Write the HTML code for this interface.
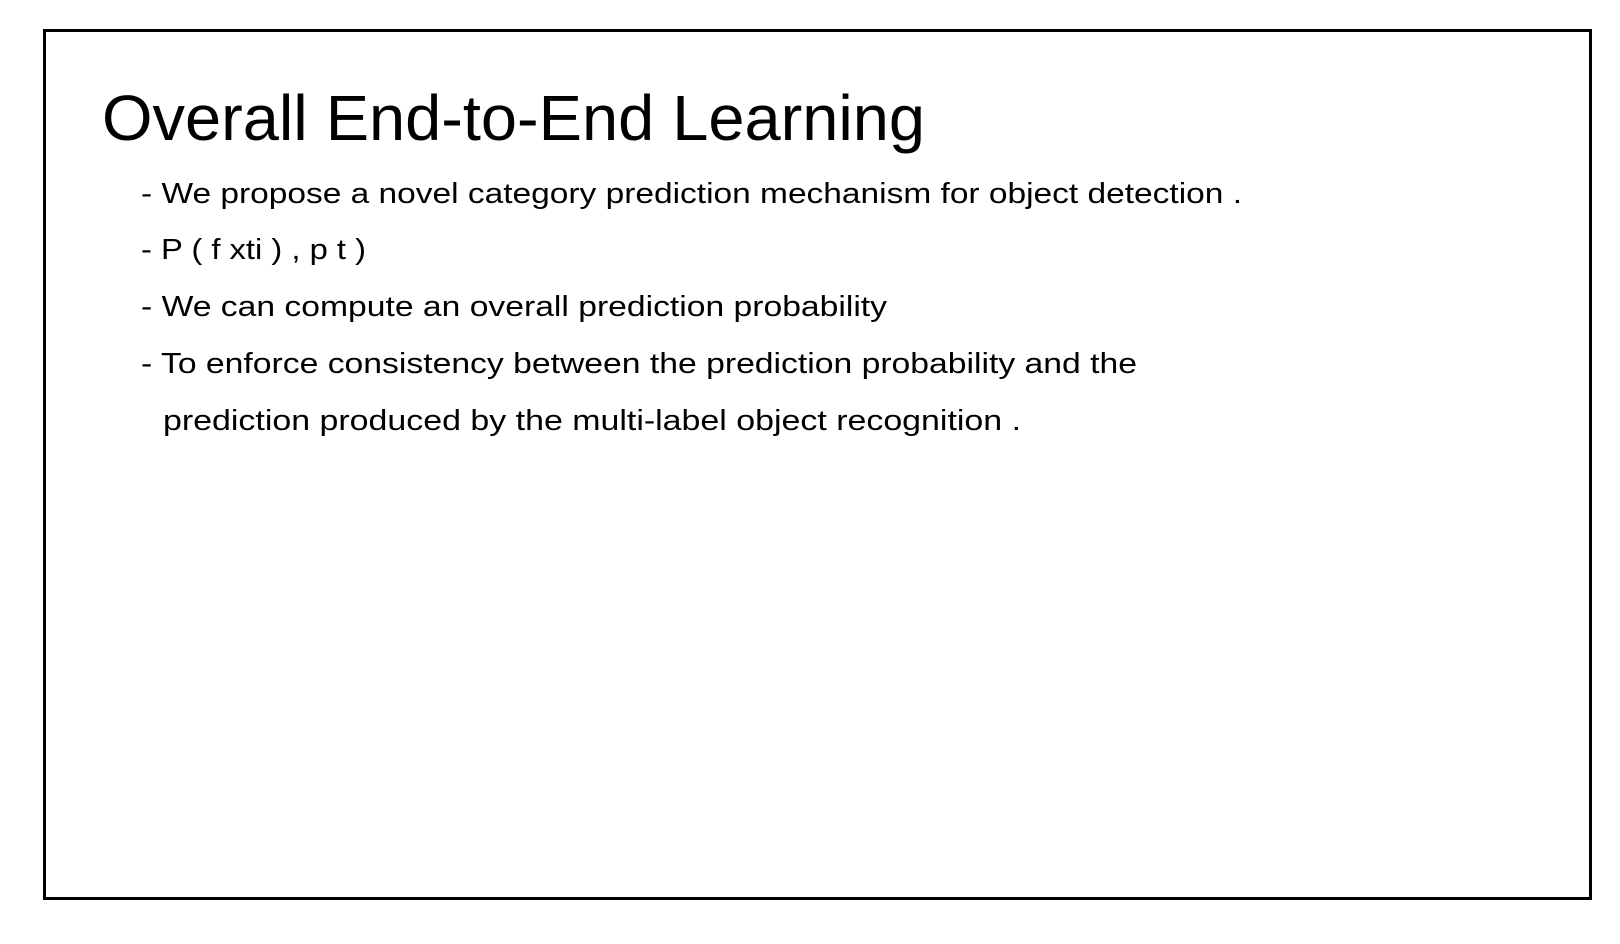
<!DOCTYPE html>
<html><head><meta charset="utf-8"><style>
html,body{margin:0;padding:0;background:#fff;width:1620px;height:944px;overflow:hidden}
svg{display:block}
text{font-family:"Liberation Sans",sans-serif;fill:#000}
</style></head><body>
<svg width="1620" height="944" viewBox="0 0 1620 944">
<rect x="44.5" y="30.5" width="1546" height="868" fill="none" stroke="#000" stroke-width="3"/>
<text x="102" y="140" font-size="64" textLength="823" lengthAdjust="spacingAndGlyphs">Overall End-to-End Learning</text>
<g font-size="29">
<text x="141" y="203" textLength="1101" lengthAdjust="spacingAndGlyphs">- We propose a novel category prediction mechanism for object detection .</text>
<text x="141" y="259" textLength="225" lengthAdjust="spacingAndGlyphs">- P ( f xti ) , p t )</text>
<text x="141" y="316" textLength="746" lengthAdjust="spacingAndGlyphs">- We can compute an overall prediction probability</text>
<text x="141" y="373" textLength="996" lengthAdjust="spacingAndGlyphs">- To enforce consistency between the prediction probability and the</text>
<text x="163" y="430" textLength="858" lengthAdjust="spacingAndGlyphs">prediction produced by the multi-label object recognition .</text>
</g>
</svg>
</body></html>
